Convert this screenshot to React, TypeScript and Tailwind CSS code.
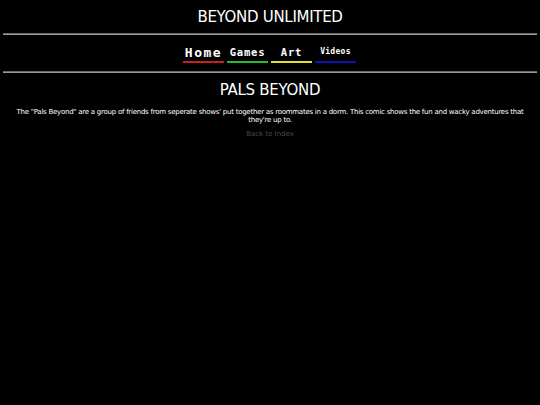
const navItems = [
  { label: "Home", size: "text-[13px]", track: "tracking-[1.5px]", bar: "border-[#c42020]" },
  { label: "Games", size: "text-[10.5px]", track: "tracking-[0.8px]", bar: "border-[#22bb33]" },
  { label: "Art", size: "text-[10.5px]", track: "tracking-[0.8px]", bar: "border-[#e6e033]" },
  { label: "Videos", size: "text-[8px]", track: "tracking-[0.3px]", bar: "border-[#1010b0]" },
];

export default function App() {
  return (
    <div className="min-h-[405px] bg-black text-white text-center font-['DejaVu_Sans',sans-serif]">
      <h1 className="pt-[8px] h-[33px] text-[15px] leading-[18px] tracking-[-0.3px]">BEYOND UNLIMITED</h1>
      <div className="mx-[3px] h-[2px] border-t border-[#6a6a6a] border-b-[#9a9a9a] border-b bg-[#888]" />
      <nav className="flex justify-center gap-[3px] pt-[8px] ml-[-1px]">
        {navItems.map((item) => (
          <div
            key={item.label}
            className={`w-[41px] h-[20px] flex items-center justify-center border-b-[2px] ${item.bar} font-['DejaVu_Sans_Mono',monospace] font-bold ${item.size} ${item.track} leading-none`}
          >
            {item.label}
          </div>
        ))}
      </nav>
      <div className="mx-[3px] mt-[8px] h-[2px] border-t border-[#6a6a6a] border-b-[#9a9a9a] border-b bg-[#888]" />
      <h2 className="pt-[8px] text-[15px] leading-[18px] tracking-[-0.3px]">PALS BEYOND</h2>
      <p className="mt-[9px] px-[8px] text-[7px] leading-[8px] tracking-[-0.25px]">
        The "Pals Beyond" are a group of friends from seperate shows' put together as roommates in a dorm. This comic shows the fun and wacky adventures that they're up to.
      </p>
      <p className="mt-[6px] text-[7px] leading-[8px] text-[#4a4a4a]">Back to Index</p>
    </div>
  );
}
